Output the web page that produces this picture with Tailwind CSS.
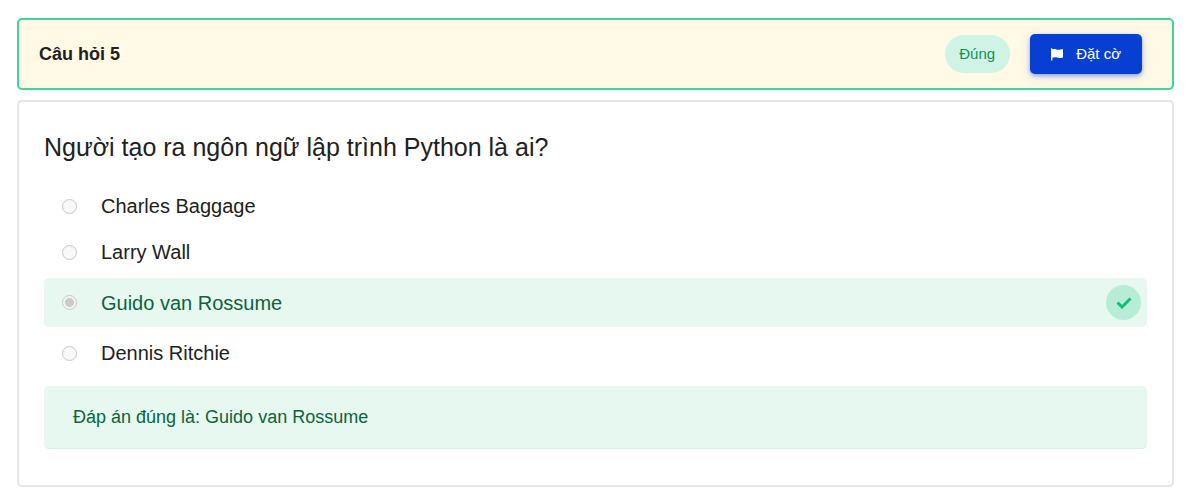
<!DOCTYPE html>
<html lang="vi">
<head>
<meta charset="utf-8">
<meta name="viewport" content="width=device-width, initial-scale=1">
<title>Câu hỏi 5</title>
<script src="https://cdn.jsdelivr.net/npm/@tailwindcss/browser@4"></script>
</head>
<body class="bg-white font-['Liberation_Sans',Arial,sans-serif] text-[#212121]">
<main class="flex flex-col gap-[10px] pt-[18px] pr-[14px] pb-[11px] pl-[17px]">
  <header class="flex items-center justify-between rounded-[5px] border-2 border-[#3dd598] bg-[#fff9e6] py-[14px] pr-[30px] pl-5">
    <h1 class="text-[18px] leading-6 font-bold">Câu hỏi 5</h1>
    <div class="flex items-center gap-5">
      <span class="rounded-full bg-[#cff3e5] py-[9px] pr-[15px] pl-[14px] text-[15px] leading-5 text-[#12925b]">Đúng</span>
      <button type="button" class="flex h-10 items-center gap-[12px] rounded-[5px] bg-[#063fd1] pr-[21px] pl-5 text-[15px] leading-5 text-white shadow-[0_2px_4px_#063fd166,0_3px_14px_#063fd11a]">
        <svg class="h-4 w-[14px]" viewBox="0 0 14 16" fill="currentColor" aria-hidden="true"><path d="M1 2.8Q1 2 1.7 2Q2.4 2 2.4 2.8V3.4C5 2.4 7 4.2 9.2 3.8Q11 3.5 12.2 3Q13 2.8 13 3.7V10.9Q13 11.5 12.4 11.7C9.8 12.6 8 11.6 6 11.3Q4 11.1 2.4 11.8V13.9Q2.4 14.5 1.7 14.5Q1 14.5 1 13.9Z"/></svg>
        Đặt cờ
      </button>
    </div>
  </header>

  <section class="rounded-[5px] border-2 border-[#e6e6e6] px-[25px] pt-[29px] pb-9">
    <fieldset>
      <legend class="text-[25px] leading-8">Người tạo ra ngôn ngữ lập trình Python là ai?</legend>
      <div class="mt-5 flex flex-col">
        <label class="flex h-[46px] items-center gap-6 pl-[18px] text-[20px]"><input type="radio" name="answer" disabled class="size-[15px] appearance-none rounded-full border border-[#c8c8c8] bg-[#f8f8f8]">Charles Baggage</label>
        <label class="flex h-[46px] items-center gap-6 pl-[18px] text-[20px]"><input type="radio" name="answer" disabled class="size-[15px] appearance-none rounded-full border border-[#c8c8c8] bg-[#f8f8f8]">Larry Wall</label>
        <label class="my-[3px] flex h-[49px] items-center gap-6 rounded-[5px] bg-[#e7f8f0] pr-[6px] pl-[18px] text-[20px] text-[#0b6340]"><input type="radio" name="answer" disabled checked class="size-[15px] appearance-none rounded-full border border-[#c8c8c8] bg-[#f2f6f4] bg-[radial-gradient(circle,#c8cbc9_4px,transparent_5px)]">Guido van Rossume
          <span class="ml-auto flex size-[35px] items-center justify-center rounded-full bg-[#b7edd6]">
            <svg class="h-3 w-4 text-[#12bf78]" viewBox="0 0 16 12" fill="none" stroke="currentColor" stroke-width="3" aria-hidden="true"><path d="M1.5 5.5L6 10L14.5 1.5"/></svg>
          </span>
        </label>
        <label class="flex h-[46px] items-center gap-6 pl-[18px] text-[20px]"><input type="radio" name="answer" disabled class="size-[15px] appearance-none rounded-full border border-[#c8c8c8] bg-[#f8f8f8]">Dennis Ritchie</label>
      </div>
    </fieldset>
    <p class="mt-[10px] rounded-[5px] border-b border-[#cff3e5] bg-[#e7f8f0] px-[29px] py-[19px] text-[18px] leading-6 text-[#0b6340]">Đáp án đúng là: Guido van Rossume</p>
  </section>
</main>
</body>
</html>
